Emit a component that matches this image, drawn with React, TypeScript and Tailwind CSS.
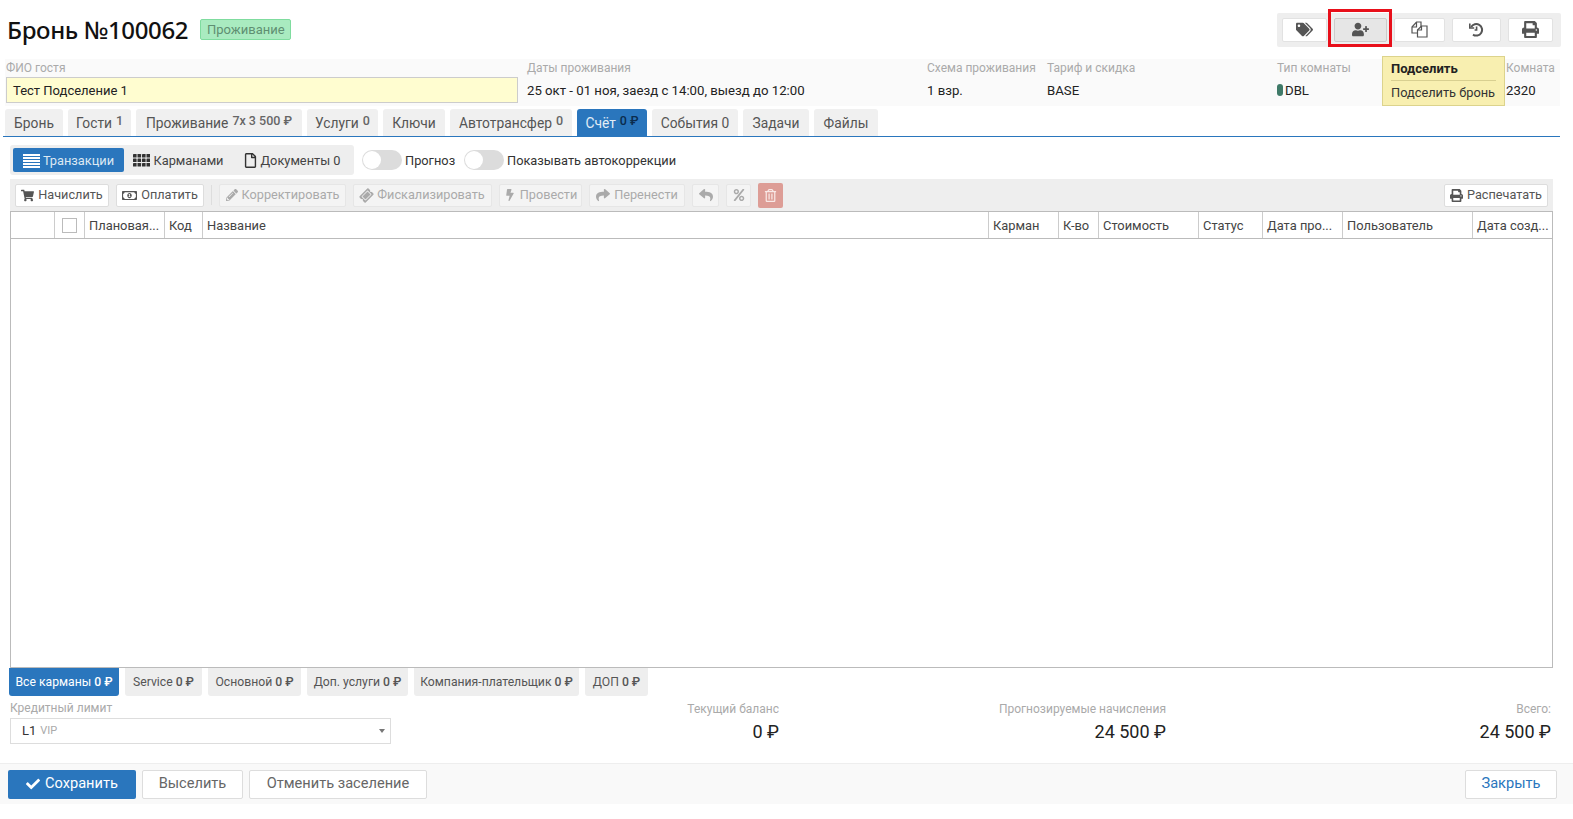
import React from "react";
import { FaTags, FaUserPlus, FaPrint, FaShoppingCart, FaRegMoneyBillAlt, FaPencilAlt, FaTicketAlt, FaBolt, FaShare, FaReply, FaPercent, FaRegTrashAlt, FaCheck, FaRegFile } from "react-icons/fa";

const tabs = [
  { w: "w-[58px]", t: "Бронь" },
  { w: "w-[63px]", t: "Гости", c: "1" },
  { w: "w-[166px]", t: "Проживание", c: "7x 3 500 ₽" },
  { w: "w-[71px]", t: "Услуги", c: "0" },
  { w: "w-[62px]", t: "Ключи" },
  { w: "w-[122px]", t: "Автотрансфер", c: "0" },
  { w: "w-[70px]", t: "Счёт", c: "0 ₽", a: true },
  { w: "w-[86px]", t: "События 0" },
  { w: "w-[66px]", t: "Задачи" },
  { w: "w-[64px]", t: "Файлы" },
];

const cols = [
  { w: "w-[44px]", t: "" },
  { w: "w-[30px]", t: "", check: true },
  { w: "w-[80px]", t: "Плановая..." },
  { w: "w-[38px]", t: "Код" },
  { w: "w-[786px]", t: "Название" },
  { w: "w-[70px]", t: "Карман" },
  { w: "w-[40px]", t: "К-во" },
  { w: "w-[100px]", t: "Стоимость" },
  { w: "w-[64px]", t: "Статус" },
  { w: "w-[80px]", t: "Дата про..." },
  { w: "w-[130px]", t: "Пользователь" },
  { w: "flex-1", t: "Дата созд..." },
];

const pockets = [
  { w: "w-[110px]", t: "Все карманы", a: true },
  { w: "w-[77px]", t: "Service" },
  { w: "w-[93px]", t: "Основной" },
  { w: "w-[101px]", t: "Доп. услуги" },
  { w: "w-[165px]", t: "Компания-плательщик" },
  { w: "w-[63px]", t: "ДОП" },
];

function ListIcon() {
  return (
    <svg width="17" height="14" viewBox="0 0 17 14" fill="white">
      <rect x="0" y="0" width="17" height="2" />
      <rect x="0" y="3" width="17" height="2" />
      <rect x="0" y="6" width="17" height="2" />
      <rect x="0" y="9" width="17" height="2" />
      <rect x="0" y="12" width="17" height="2" />
    </svg>
  );
}

function GridIcon() {
  const xs = [0, 4.5, 9, 13.5];
  const ys = [0, 4.5, 9];
  return (
    <svg width="17" height="13" viewBox="0 0 17 13" fill="#333">
      {ys.map((y) => xs.map((x) => <rect key={`${x}-${y}`} x={x} y={y} width="3.6" height="3.6" rx="0.4" />))}
    </svg>
  );
}

function FilesIcon() {
  return (
    <svg width="17" height="17" viewBox="0 0 17 17" fill="white" stroke="#555" strokeWidth="1.2">
      <path d="M1 6 L5.5 1 H10 V12 H1 Z" />
      <path d="M5.5 1 V6 H1" fill="none" />
      <path d="M6.5 9 L10.5 5 H16 V16 H6.5 Z" />
      <path d="M10.5 5 V9 H6.5" fill="none" />
    </svg>
  );
}

function UndoClockIcon() {
  return (
    <svg width="15" height="15" viewBox="0 0 15 15" fill="none" stroke="#555" strokeWidth="2">
      <path d="M2.2 5 A5.8 5.8 0 1 1 4 12.6" />
      <path d="M0.8 1.4 V6 H5.2" strokeWidth="1.6" />
      <path d="M7.6 4.4 V8 H5.6" strokeWidth="1.6" />
    </svg>
  );
}

function TopBtn({ w, active, children }: { w: string; active?: boolean; children: React.ReactNode }) {
  return (
    <div className={`${w} h-[24px] flex items-center justify-center rounded-[2px] border text-[#555] text-[17px] ${active ? "bg-[#e6e6e6] border-[#ccc]" : "bg-white border-[#e2e2e2]"}`}>
      {children}
    </div>
  );
}

function ToolBtn({ w, off, icon, children }: { w: string; off?: boolean; icon: React.ReactNode; children?: React.ReactNode }) {
  return (
    <div className={`${w} h-[23px] flex items-center justify-center gap-[4px] rounded-[2px] border text-[12.7px] ${off ? "bg-[#f4f4f4] border-[#e6e6e6] text-[#aaa]" : "bg-white border-[#ddd] text-[#555]"}`}>
      {icon}
      {children}
    </div>
  );
}

function Toggle() {
  return (
    <div className="w-[40px] h-[20px] rounded-full bg-[#dcdcdc] flex items-center pl-[1px]">
      <div className="w-[18px] h-[18px] rounded-full bg-white" />
    </div>
  );
}

function Info({ w, label, value }: { w: string; label: string; value: React.ReactNode }) {
  return (
    <div className={`${w} flex flex-col`}>
      <div className="h-[18px] pt-[2px] text-[12px] leading-[14px] text-[#aaa]">{label}</div>
      <div className="h-[26px] pt-[1px] flex items-center text-[13.2px] text-[#222]">{value}</div>
    </div>
  );
}

function Total({ w, label, value }: { w: string; label: string; value: string }) {
  return (
    <div className={`${w} text-right`}>
      <div className="h-[23px] pt-[3px] flex items-center justify-end text-[12px] text-[#aaa]">{label}</div>
      <div className="h-[25px] flex items-center justify-end text-[18px] text-[#222]">{value}</div>
    </div>
  );
}

export default function App() {
  return (
    <div className="relative w-[1573px] h-[819px] overflow-hidden bg-white font-['Roboto','Noto_Sans',sans-serif]">
      <div className="h-[59px] flex items-center justify-between pl-[7px] pr-[12px]">
        <div className="flex items-center gap-[12px]">
          <h1 className="text-[24px] font-medium leading-none text-[#111] font-['Noto_Sans',sans-serif] tracking-[-0.35px]">Бронь №100062</h1>
          <span className="w-[91px] h-[21px] flex items-center justify-center rounded-[2px] border border-[#7fdc9f] bg-[#a9ebc0] text-[13px] text-[#5f8f72]">Проживание</span>
        </div>
        <div className="w-[284px] h-[34px] rounded-[2px] bg-[#eeeeee] flex items-center gap-[7px] pl-[5px]">
          <TopBtn w="w-[45px]"><FaTags /></TopBtn>
          <TopBtn w="w-[53px]" active><FaUserPlus /></TopBtn>
          <TopBtn w="w-[51px]"><FilesIcon /></TopBtn>
          <TopBtn w="w-[49px]"><UndoClockIcon /></TopBtn>
          <TopBtn w="w-[45px]"><FaPrint /></TopBtn>
        </div>
      </div>

      <div className="ml-[5px] w-[1555px] h-[47px] bg-[#fafafa] flex">
        <div className="w-[522px] flex flex-col pl-[1px]">
          <div className="h-[18px] pt-[2px] text-[12px] leading-[14px] text-[#aaa]">ФИО гостя</div>
          <div className="w-[512px] h-[26px] pt-[1px] flex items-center pl-[6px] border border-[#ccc] bg-[#fffdd0] text-[13px] text-[#222]">Тест Подселение 1</div>
        </div>
        <Info w="w-[400px]" label="Даты проживания" value="25 окт - 01 ноя, заезд с 14:00, выезд до 12:00" />
        <Info w="w-[120px]" label="Схема проживания" value="1 взр." />
        <Info w="w-[230px]" label="Тариф и скидка" value="BASE" />
        <Info
          w="w-[229px]"
          label="Тип комнаты"
          value={
            <span className="flex items-center gap-[2px]">
              <span className="w-[6px] h-[12px] rounded-[3px] bg-[#3f7a68]" />
              DBL
            </span>
          }
        />
        <Info w="flex-1" label="Комната" value="2320" />
      </div>

      <div className="mt-[3px] ml-[3px] w-[1557px] h-[28px] pl-[2px] flex gap-[5px] border-b border-[#2a76bd]">
        {tabs.map((t) => (
          <div key={t.t} className={`${t.w} h-[27px] pt-[1px] flex items-center justify-center gap-[4px] rounded-t-[3px] text-[13.8px] ${t.a ? "bg-[#2a76bd] text-[#e3edf6]" : "bg-[#f0f0f0] text-[#555]"}`}>
            {t.t}
            {t.c && <span className={`text-[12.5px] font-medium -mt-[3px] ${t.a ? "text-[#0b2c4d]" : "text-[#666]"}`}>{t.c}</span>}
          </div>
        ))}
      </div>

      <div className="mt-[8px] ml-[10px] h-[30px] flex items-center">
        <div className="w-[344px] h-[30px] rounded-[3px] bg-[#eeeeee] flex items-center pl-[3px] text-[12.8px] text-[#444]">
          <div className="w-[111px] h-[24px] pt-[1px] flex items-center justify-center gap-[3px] rounded-[2px] bg-[#2a76bd] text-[#dce8f3]">
            <ListIcon />Транзакции
          </div>
          <div className="w-[109px] pt-[1px] flex items-center justify-center gap-[3px]">
            <GridIcon />Карманами
          </div>
          <div className="w-[118px] pt-[1px] flex items-center justify-center gap-[2px]">
            <FaRegFile className="text-[15px] text-[#333]" />Документы 0
          </div>
        </div>
        <div className="ml-[8px] flex items-center gap-[3px] text-[12.8px] text-[#333]">
          <Toggle />
          <span className="w-[57px] pt-[1px]">Прогноз</span>
        </div>
        <div className="ml-[2px] flex items-center gap-[3px] text-[12.8px] text-[#333]">
          <Toggle />
          <span className="pt-[1px]">Показывать автокоррекции</span>
        </div>
      </div>

      <div className="mt-[4px] ml-[10px] w-[1543px] h-[32px] bg-[#eeeeee] flex items-center pl-[5px] pr-[5px] gap-[7px]">
        <ToolBtn w="w-[94px]" icon={<FaShoppingCart className="text-[13px]" />}>Начислить</ToolBtn>
        <ToolBtn w="w-[88px]" icon={<FaRegMoneyBillAlt className="text-[15px]" />}>Оплатить</ToolBtn>
        <div className="w-[1px] h-[20px] bg-[#ddd]" />
        <ToolBtn w="w-[127px]" off icon={<FaPencilAlt className="text-[12px]" />}>Корректировать</ToolBtn>
        <ToolBtn w="w-[139px]" off icon={<FaTicketAlt className="text-[13px] -rotate-45" />}>Фискализировать</ToolBtn>
        <ToolBtn w="w-[83px]" off icon={<FaBolt className="text-[12px]" />}>Провести</ToolBtn>
        <ToolBtn w="w-[96px]" off icon={<FaShare className="text-[14px]" />}>Перенести</ToolBtn>
        <ToolBtn w="w-[27px]" off icon={<FaReply className="text-[14px]" />} />
        <ToolBtn w="w-[25px]" off icon={<FaPercent className="text-[12px]" />} />
        <div className="w-[25px] h-[25px] flex items-center justify-center rounded-[2px] bg-[#dd9d96] text-[#f9e9e7] text-[13px]"><FaRegTrashAlt /></div>
        <div className="ml-auto">
          <ToolBtn w="w-[104px]" icon={<FaPrint className="text-[13px]" />}>Распечатать</ToolBtn>
        </div>
      </div>

      <div className="ml-[10px] w-[1543px] h-[457px] border border-[#bbb]">
        <div className="h-[27px] flex border-b border-[#bbb] text-[12.9px] text-[#444]">
          {cols.map((c, i) => (
            <div key={i} className={`${c.w} h-full pt-[1px] flex items-center pl-[4px] overflow-hidden whitespace-nowrap ${i < cols.length - 1 ? "border-r border-[#ccc]" : ""}`}>
              {c.check && <div className="ml-[3px] w-[15px] h-[15px] border border-[#bbb] bg-white" />}
              {c.t}
            </div>
          ))}
        </div>
      </div>

      <div className="ml-[9px] h-[28px] flex gap-[6px]">
        {pockets.map((p) => (
          <div key={p.t} className={`${p.w} h-[28px] flex items-center justify-center gap-[3px] rounded-b-[3px] text-[12.2px] ${p.a ? "bg-[#2a76bd] text-white" : "bg-[#eeeeee] text-[#555]"}`}>
            {p.t} <b className="font-medium">0 ₽</b>
          </div>
        ))}
      </div>

      <div className="h-[67px] flex pl-[10px]">
        <div className="w-[381px]">
          <div className="h-[22px] pt-[1px] flex items-center text-[12px] text-[#aaa]">Кредитный лимит</div>
          <div className="h-[26px] flex items-center justify-between pl-[11px] pr-[5px] border border-[#ddd] text-[13px] text-[#333]">
            <span className="flex items-center gap-[4px]">L1 <span className="text-[11px] text-[#aaa]">VIP</span></span>
            <span className="w-0 h-0 border-x-[3px] border-x-transparent border-t-[4px] border-t-[#777]" />
          </div>
        </div>
        <Total w="w-[388px]" label="Текущий баланс" value="0 ₽" />
        <Total w="w-[387px]" label="Прогнозируемые начисления" value="24 500 ₽" />
        <Total w="w-[385px]" label="Всего:" value="24 500 ₽" />
      </div>

      <div className="h-[41px] flex items-center border-t border-[#eeeeee] bg-[#f9f9f9] pl-[8px] pr-[16px] gap-[6px] text-[14.6px]">
        <div className="w-[128px] h-[29px] flex items-center justify-center gap-[5px] rounded-[2px] bg-[#2a76bd] text-white"><FaCheck className="text-[14px]" />Сохранить</div>
        <div className="w-[101px] h-[29px] flex items-center justify-center rounded-[2px] border border-[#ddd] bg-white text-[#666]">Выселить</div>
        <div className="w-[178px] h-[29px] flex items-center justify-center rounded-[2px] border border-[#ddd] bg-white text-[#666]">Отменить заселение</div>
        <div className="ml-auto w-[92px] h-[29px] flex items-center justify-center rounded-[2px] border border-[#ddd] bg-white text-[#2a76bd]">Закрыть</div>
      </div>

      <div className="absolute left-[1382px] top-[56px] w-[123px] h-[50px] border border-[#dcd38c] bg-[#f8efb0] px-[8px] text-[12.8px] text-[#333]">
        <div className="h-[24px] flex items-center font-bold text-[13px] text-[#222] border-b border-[#d8cf90]">Подселить</div>
        <div className="h-[24px] flex items-center whitespace-nowrap">Подселить бронь</div>
      </div>
      <div className="absolute left-[1328px] top-[9px] w-[64px] h-[38px] border-[3px] border-[#e80f1a]" />
    </div>
  );
}
